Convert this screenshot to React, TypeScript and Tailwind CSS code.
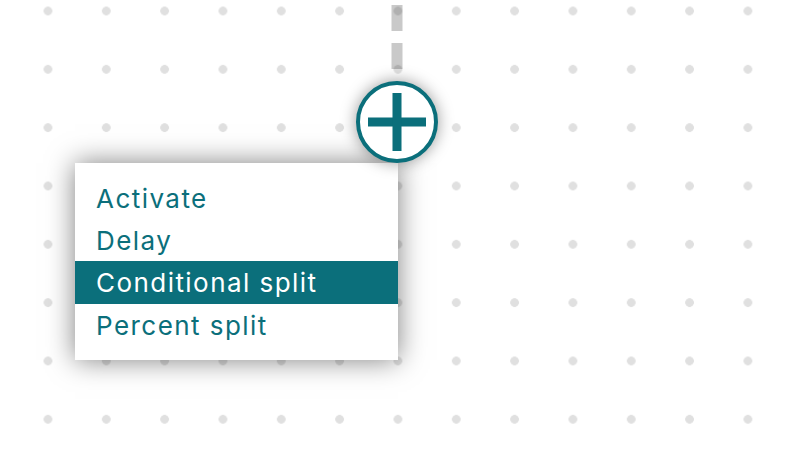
import React from 'react'

const items = ['Activate', 'Delay', 'Conditional split', 'Percent split']

function PlusNode() {
    return (
        <div className="absolute left-[356px] top-[81px] w-[82px] h-[82px] rounded-full bg-white border-[4px] border-[#0b6f7b] shadow-[0_0_16px_rgba(0,0,0,0.4)] flex items-center justify-center">
            <svg width="58" height="58" viewBox="0 0 58 58">
                <rect x="0" y="24.5" width="58" height="9" fill="#0b6f7b" />
                <rect x="24.5" y="0" width="9" height="58" fill="#0b6f7b" />
            </svg>
        </div>
    )
}

export default function App() {
    return (
        <div className="relative w-[793px] h-[449px] overflow-hidden bg-white bg-[radial-gradient(circle,#e0e0e0_4px,transparent_4.6px)] bg-size-[58.33px_58.33px] bg-position-[18.8px_-18.2px]">
            {/* connector */}
            <svg className="absolute left-[385px] top-0" width="24" height="80">
                <line x1="12" y1="-33" x2="12" y2="80" stroke="rgba(0,0,0,0.21)" strokeWidth="11" strokeDasharray="26 12" />
            </svg>

            {/* menu */}
            <div
                className="absolute left-[75px] top-[163px] w-[323px] py-[14px] bg-white shadow-[0_0_26px_rgba(0,0,0,0.5)]"
                style={{ fontFamily: 'Inter, "Noto Sans", sans-serif' }}
            >
                {items.map((item) => (
                    <div
                        key={item}
                        className={
                            item === 'Conditional split'
                                ? 'h-[43px] pl-[21px] flex items-center text-[26px] tracking-[1.45px] bg-[#0b6f7b] text-white'
                                : 'h-[42px] pl-[21px] flex items-center text-[26px] tracking-[1.45px] text-[#0b6f7b]'
                        }
                    >
                        {item}
                    </div>
                ))}
            </div>

            <PlusNode />
        </div>
    )
}
